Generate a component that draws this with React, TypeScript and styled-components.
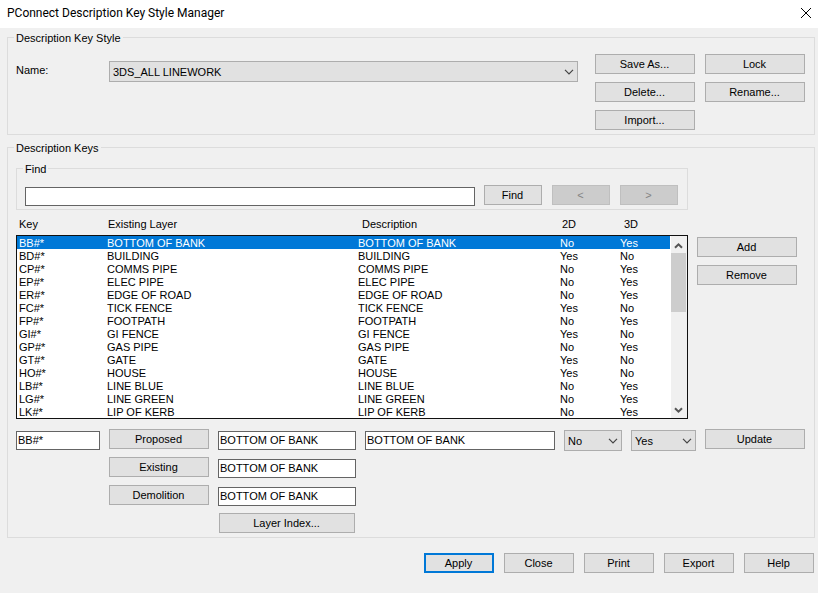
import React, { useState } from "react";
import styled, { createGlobalStyle } from "styled-components";

const GlobalStyle = createGlobalStyle`
  *, *::before, *::after { box-sizing: border-box; }
  body { margin: 0; background: #f0f0f0; }
  body, button, input, select {
    font-family: "Liberation Sans", Arial, sans-serif;
    font-size: 11px;
    line-height: 13px;
    color: #000;
  }
`;

const Dialog = styled.main`
  min-height: 100vh;
  background: #f0f0f0;
`;

const TitleBar = styled.header`
  display: flex;
  justify-content: space-between;
  align-items: center;
  height: 28px;
  padding: 0 6px 2px 7px;
  background: #fff;
`;

const Title = styled.h1`
  margin: 0;
  font: 400 12px/16px Roboto, "Noto Sans", sans-serif;
`;

const CloseButton = styled.button`
  display: flex;
  padding: 0;
  border: 0;
  background: none;
`;

const Content = styled.div`
  display: flex;
  flex-direction: column;
  gap: 6px;
  padding: 3px 3px 20px 7px;
`;

const Group = styled.fieldset`
  min-width: 0;
  margin: 0;
  padding: 10px 9px 4px 8px;
  border: 1px solid #dcdcdc;
`;

const StyleGroup = styled(Group)`
  display: flex;
  align-items: flex-start;
  gap: 17px;
`;

const KeysGroup = styled(Group)`
  padding-top: 8px;
`;

const Legend = styled.legend`
  height: 13px;
  padding: 0 2px;
  margin-left: -2px;
  line-height: 14px;
`;

const NameField = styled.div`
  display: grid;
  grid-template-columns: 93px 1fr;
  flex: 1;
  padding-top: 7px;
`;

const NameLabel = styled.label`
  padding-top: 3px;
`;

const StyleActions = styled.div`
  display: grid;
  grid-template-columns: 100px 100px;
  gap: 8px 10px;
`;

const Button = styled.button<{ $primary?: boolean }>`
  height: 20px;
  padding: 0 5px 0 4px;
  border: ${(p) => (p.$primary ? "2px solid #0078d7" : "1px solid #adadad")};
  border-radius: 0;
  background: #e1e1e1;
  line-height: 16px;
  white-space: nowrap;
  &:disabled {
    border-color: #bfbfbf;
    background: #cccccc;
    color: #838383;
  }
`;

const SelectFrame = styled.div`
  display: grid;
  align-items: center;
  height: 21px;
  > * { grid-area: 1 / 1; }
  svg {
    justify-self: end;
    margin-right: 4px;
    pointer-events: none;
  }
`;

const Select = styled.select`
  width: 100%;
  height: 21px;
  padding: 1px 16px 0 3px;
  border: 1px solid #adadad;
  border-radius: 0;
  background: #e1e1e1;
  appearance: none;
`;

const TextInput = styled.input`
  width: 100%;
  min-width: 0;
  height: 19px;
  padding: 0 1px 2px;
  border: 1px solid #646464;
  border-radius: 0;
  background: #fff;
`;

const KeysLayout = styled.div`
  display: flex;
  gap: 9px;
  padding-right: 8px;
`;

const KeysMain = styled.div`
  flex: 1;
  min-width: 0;
`;

const FindGroup = styled(Group)`
  display: flex;
  gap: 10px;
`;

const FindInput = styled(TextInput)`
  flex: 1;
  margin: 2px -1px -2px 0;
`;

const FindButton = styled(Button)`
  width: 58px;
`;

const SideActions = styled.div`
  display: flex;
  flex-direction: column;
  gap: 8px;
  width: 100px;
  padding-top: 75px;
`;

const ListArea = styled.div`
  display: grid;
  grid-template-columns: 1fr 18px;
  grid-template-rows: 25px 1fr;
`;

const KeyTable = styled.table`
  display: block;
  grid-area: 1 / 1 / 3 / 3;
  thead { display: block; }
  tbody {
    display: block;
    padding-right: 17px;
    border: 1px solid #111;
    background: #fff;
  }
  th, td {
    padding: 0;
    font-weight: 400;
    line-height: 15px;
    text-align: left;
    white-space: nowrap;
  }
`;

const HeadRow = styled.tr`
  display: grid;
  grid-template-columns: 89fr 254fr 200fr 62fr 46fr;
  align-items: center;
  height: 25px;
  padding: 3px 18px 0 3px;
`;

const KeyRow = styled.tr<{ $selected: boolean }>`
  display: grid;
  grid-template-columns: 88fr 251fr 202fr 60fr 50fr;
  height: 13px;
  padding-left: 2px;
  background: ${(p) => (p.$selected ? "#0078d7" : "transparent")};
  color: ${(p) => (p.$selected ? "#fff" : "#000")};
`;

const ScrollBar = styled.div`
  grid-area: 2 / 2;
  display: flex;
  flex-direction: column;
  width: 16px;
  margin: 1px;
  background: #f0f0f0;
`;

const ScrollButton = styled.button`
  display: flex;
  justify-content: center;
  align-items: center;
  width: 15px;
  height: 17px;
  padding: 1px 0 0;
  border: 0;
  background: #f0f0f0;
`;

const ScrollTrack = styled.div`
  flex: 1;
  width: 15px;
`;

const ScrollThumb = styled.div`
  height: 59px;
  background: #cdcdcd;
`;

const EditGrid = styled.div`
  display: grid;
  grid-template-columns: 84fr 100px 138fr 190fr 58px 65px 100px;
  grid-template-rows: 28px 28px 28px 20px;
  column-gap: 9px;
  align-items: start;
  padding-top: 10px;
  ${TextInput} { margin-top: 2px; }
  ${SelectFrame} { margin-top: 1px; }
`;

const ActionCell = styled(Button)`
  grid-column: 2;
`;

const LayerInput = styled(TextInput)`
  grid-column: 3;
  margin-top: 2px;
`;

const LayerIndexButton = styled(Button)`
  grid-column: 3;
  margin: 0 1px;
`;

const Footer = styled.footer`
  display: flex;
  justify-content: flex-end;
  gap: 10px;
  padding: 9px 1px 0 0;
  ${Button} { width: 70px; }
`;

const DropArrow = () => (
  <svg width="10" height="6" viewBox="0 0 10 6" fill="none" stroke="#444" strokeWidth="1.2" aria-hidden="true">
    <path d="M1 .8 5 4.8 9 .8" />
  </svg>
);

const ScrollArrow = ({ down }: { down?: boolean }) => (
  <svg width="9" height="7" viewBox="0 0 9 7" fill="none" stroke="#555" strokeWidth="2" aria-hidden="true">
    <path d={down ? "M1 1.2 4.5 4.7 8 1.2" : "M1 5.8 4.5 2.3 8 5.8"} />
  </svg>
);

const rows: [string, string, boolean][] = [
  ["BB#*", "BOTTOM OF BANK", false],
  ["BD#*", "BUILDING", true],
  ["CP#*", "COMMS PIPE", false],
  ["EP#*", "ELEC PIPE", false],
  ["ER#*", "EDGE OF ROAD", false],
  ["FC#*", "TICK FENCE", true],
  ["FP#*", "FOOTPATH", false],
  ["GI#*", "GI FENCE", true],
  ["GP#*", "GAS PIPE", false],
  ["GT#*", "GATE", true],
  ["HO#*", "HOUSE", true],
  ["LB#*", "LINE BLUE", false],
  ["LG#*", "LINE GREEN", false],
  ["LK#*", "LIP OF KERB", false],
];

function YesNo({ label, initial }: { label: string; initial: string }) {
  return (
    <SelectFrame>
      <Select aria-label={label} defaultValue={initial}>
        <option>Yes</option>
        <option>No</option>
      </Select>
      <DropArrow />
    </SelectFrame>
  );
}

export default function App() {
  const [selected, setSelected] = useState(0);
  return (
    <>
      <GlobalStyle />
      <Dialog>
        <TitleBar>
          <Title>PConnect Description Key Style Manager</Title>
          <CloseButton aria-label="Close window">
            <svg width="12" height="12" viewBox="0 0 12 12" stroke="#000" fill="none">
              <path d="M1 1 11 11M11 1 1 11" />
            </svg>
          </CloseButton>
        </TitleBar>
        <Content>
          <StyleGroup>
            <Legend>Description Key Style</Legend>
            <NameField>
              <NameLabel htmlFor="style-name">Name:</NameLabel>
              <SelectFrame>
                <Select id="style-name">
                  <option>3DS_ALL LINEWORK</option>
                </Select>
                <DropArrow />
              </SelectFrame>
            </NameField>
            <StyleActions>
              <Button>Save As...</Button>
              <Button>Lock</Button>
              <Button>Delete...</Button>
              <Button>Rename...</Button>
              <Button>Import...</Button>
            </StyleActions>
          </StyleGroup>
          <KeysGroup>
            <Legend>Description Keys</Legend>
            <KeysLayout>
              <KeysMain>
                <FindGroup>
                  <Legend>Find</Legend>
                  <FindInput aria-label="Find" />
                  <FindButton>Find</FindButton>
                  <FindButton disabled>&lt;</FindButton>
                  <FindButton disabled>&gt;</FindButton>
                </FindGroup>
                <ListArea>
                  <KeyTable>
                    <thead>
                      <HeadRow>
                        <th>Key</th>
                        <th>Existing Layer</th>
                        <th>Description</th>
                        <th>2D</th>
                        <th>3D</th>
                      </HeadRow>
                    </thead>
                    <tbody>
                      {rows.map(([key, layer, flat], i) => (
                        <KeyRow key={key} $selected={i === selected} onClick={() => setSelected(i)}>
                          <td>{key}</td>
                          <td>{layer}</td>
                          <td>{layer}</td>
                          <td>{flat ? "Yes" : "No"}</td>
                          <td>{flat ? "No" : "Yes"}</td>
                        </KeyRow>
                      ))}
                    </tbody>
                  </KeyTable>
                  <ScrollBar>
                    <ScrollButton aria-label="Scroll up"><ScrollArrow /></ScrollButton>
                    <ScrollTrack><ScrollThumb /></ScrollTrack>
                    <ScrollButton aria-label="Scroll down"><ScrollArrow down /></ScrollButton>
                  </ScrollBar>
                </ListArea>
              </KeysMain>
              <SideActions>
                <Button>Add</Button>
                <Button>Remove</Button>
              </SideActions>
            </KeysLayout>
            <EditGrid>
              <TextInput aria-label="Key" defaultValue="BB#*" />
              <Button>Proposed</Button>
              <TextInput aria-label="Proposed layer" defaultValue="BOTTOM OF BANK" />
              <TextInput aria-label="Description" defaultValue="BOTTOM OF BANK" />
              <YesNo label="2D" initial="No" />
              <YesNo label="3D" initial="Yes" />
              <Button>Update</Button>
              <ActionCell>Existing</ActionCell>
              <LayerInput aria-label="Existing layer" defaultValue="BOTTOM OF BANK" />
              <ActionCell>Demolition</ActionCell>
              <LayerInput aria-label="Demolition layer" defaultValue="BOTTOM OF BANK" />
              <LayerIndexButton>Layer Index...</LayerIndexButton>
            </EditGrid>
          </KeysGroup>
          <Footer>
            <Button $primary>Apply</Button>
            <Button>Close</Button>
            <Button>Print</Button>
            <Button>Export</Button>
            <Button>Help</Button>
          </Footer>
        </Content>
      </Dialog>
    </>
  );
}
